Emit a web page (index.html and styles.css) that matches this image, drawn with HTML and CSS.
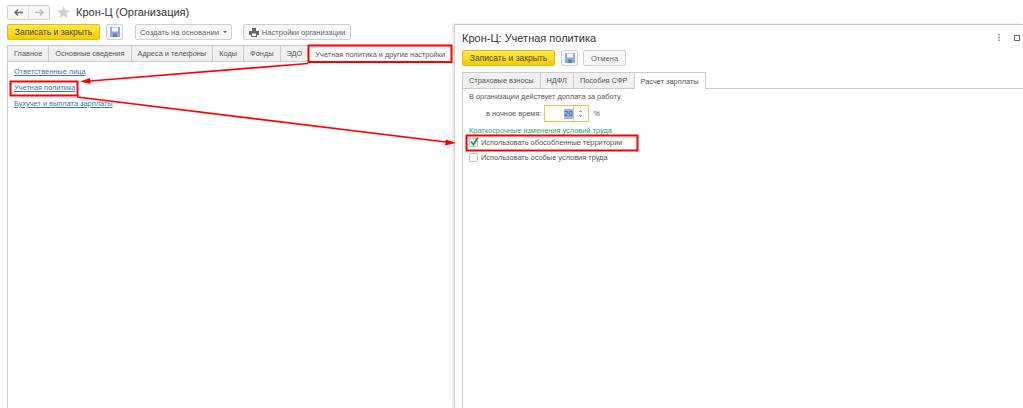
FILE: index.html
```html
<!DOCTYPE html>
<html lang="ru">
<head>
    <meta charset="UTF-8">
    <title>Крон-Ц (Организация)</title>
    <link rel="stylesheet" href="styles.css">
</head>
<body>
    <div class="page">
        <div class="org">
            <div class="title-row">
                <div class="nav-btns">
                    <span class="nav-btn">
                        <svg width="9" height="7" viewBox="0 0 9 7"><path d="M4 0.5 L1 3.5 L4 6.500 M1 3.500 H9" fill="none" stroke="#666" stroke-width="1.4"/></svg>
                    </span>
                    <span class="nav-btn">
                        <svg width="9" height="7" viewBox="0 0 9 7"><path d="M5 0.5 L8 3.5 L5 6.500 M8 3.500 H0" fill="none" stroke="#bbb" stroke-width="1.4"/></svg>
                    </span>
                </div>
                <svg class="star" width="13" height="12" viewBox="0 0 14 13"><path d="M7 0 L8.9 4.400 L14 4.900 L10.100 8 L11.300 13 L7 10.300 L2.700 13 L3.900 8 L0 4.900 L5.100 4.400 Z" fill="#cfcfcf"/></svg>
                <h1 class="org-title">Крон-Ц (Организация)</h1>
            </div>
            <div class="toolbar">
                <button class="btn btn-primary">Записать и закрыть</button>
                <button class="btn btn-icon">
                    <svg width="10" height="10" viewBox="0 0 10 10"><path d="M0 0 H10 V10 H0 Z" fill="#8fadd4"/><path d="M2 0.5 H8 V4.500 H2 Z" fill="#f4f7fb"/><path d="M3 6.500 H7 V10 H3 Z" fill="#5a7fb5"/></svg>
                </button>
                <button class="btn btn-create">Создать на основании<span class="caret"></span></button>
                <button class="btn btn-settings">
                    <svg width="10" height="9" viewBox="0 0 10 9"><path d="M3 0 H7 V3 H10 V7 H8 V9 H2 V7 H0 V3 H3 Z" fill="#666"/><path d="M3 5.500 H7 V8 H3 Z" fill="#fff"/></svg>
                    Настройки организации
                </button>
            </div>
            <div class="panel">
                <div class="tabs">
                    <span class="tab">Главное</span>
                    <span class="tab">Основные сведения</span>
                    <span class="tab">Адреса и телефоны</span>
                    <span class="tab">Коды</span>
                    <span class="tab">Фонды</span>
                    <span class="tab">ЭДО</span>
                    <span class="tab tab-active">Учетная политика и другие настройки</span>
                </div>
                <div class="links">
                    <a class="link">Ответственные лица</a>
                    <a class="link">Учетная политика</a>
                    <a class="link">Бухучет и выплата зарплаты</a>
                </div>
            </div>
        </div>

        <div class="dialog">
            <div class="dialog-head">
                <h2 class="dialog-title">Крон-Ц: Учетная политика</h2>
                <div class="dialog-tools">
                    <svg width="2" height="7" viewBox="0 0 2 7"><path d="M0 0 H2 V1.500 H0 Z M0 2.750 H2 V4.250 H0 Z M0 5.500 H2 V7 H0 Z" fill="#999"/></svg>
                    <svg width="6" height="6" viewBox="0 0 6 6"><rect x="0.5" y="0.5" width="5" height="5" fill="none" stroke="#666"/></svg>
                </div>
            </div>
            <div class="toolbar dialog-toolbar">
                <button class="btn btn-primary">Записать и закрыть</button>
                <button class="btn btn-icon">
                    <svg width="10" height="10" viewBox="0 0 10 10"><path d="M0 0 H10 V10 H0 Z" fill="#8fadd4"/><path d="M2 0.5 H8 V4.500 H2 Z" fill="#f4f7fb"/><path d="M3 6.500 H7 V10 H3 Z" fill="#5a7fb5"/></svg>
                </button>
                <button class="btn btn-cancel">Отмена</button>
            </div>
            <div class="panel">
                <div class="tabs">
                    <span class="tab">Страховые взносы</span>
                    <span class="tab">НДФЛ</span>
                    <span class="tab">Пособия СФР</span>
                    <span class="tab tab-active">Расчет зарплаты</span>
                </div>
                <div class="form">
                    <div class="form-line">В организации действует доплата за работу</div>
                    <div class="night-row">
                        <span>в ночное время:</span>
                        <span class="num-field">
                            <span class="num-value"><span class="num-selected">20</span></span>
                            <span class="num-spin">
                                <svg width="5" height="11" viewBox="0 0 5 11"><path d="M2 2 H3 V3 H2 Z M1 3 H4 V4 H1 Z M1 7 H4 V8 H1 Z M2 8 H3 V9 H2 Z" fill="#aaa"/></svg>
                            </span>
                        </span>
                        <span class="percent">%</span>
                    </div>
                    <div class="group-title">Краткосрочные изменения условий труда</div>
                    <div class="check-row">
                        <span class="check check-on">
                            <svg class="tick" width="9" height="9" viewBox="0 0 9 9"><path d="M1 4.500 L3.500 7.500 L8 0.500" fill="none" stroke="#1b9e4b" stroke-width="1.700"/></svg>
                        </span>
                        Использовать обособленные территории
                    </div>
                    <div class="check-row">
                        <span class="check"></span>
                        Использовать особые условия труда
                    </div>
                </div>
            </div>
        </div>

        <!-- red marks drawn over the screenshot -->
        <svg class="marks" width="1023" height="408" viewBox="0 0 1023 408">
            <g fill="none" stroke="#f00" stroke-width="2">
                <rect x="308.500" y="45.500" width="143" height="16.500"/>
                <rect x="10.500" y="81.500" width="67" height="14"/>
                <rect x="466.500" y="135.500" width="171" height="15"/>
            </g>
            <g fill="none" stroke="#f00" stroke-width="1.600">
                <path d="M308 63.500 L90 81"/>
                <path d="M77 97 L446 142"/>
            </g>
            <path d="M80 81.500 L90 78 L90.500 84 Z" fill="#f00"/>
            <path d="M456 143 L446 139.500 L445 145.500 Z" fill="#f00"/>
        </svg>
    </div>
</body>
</html>
```

FILE: styles.css
```css
* {
    box-sizing: border-box;
}
html, body {
    margin: 0;
    height: 100%;
    background-color: #fff;
    overflow: hidden;
}
body {
    font-family: "Liberation Sans", Arial, sans-serif;
    font-size: 7.4px;
    color: #555;
}
h1, h2 {
    margin: 0;
    font-weight: normal;
    color: #333;
}
.page {
    position: relative;
    display: flex;
    width: 1023px;
    height: 408px;
}

/* left form */
.org {
    width: 454px;
    padding: 4px 0 0 7px;
    display: flex;
    flex-direction: column;
}
.title-row {
    display: flex;
    align-items: center;
    height: 16px;
}
.nav-btns {
    display: flex;
    width: 43px;
    height: 15px;
    border: 1px solid #d0d0d0;
    border-radius: 2px;
    background-color: #f7f7f7;
}
.nav-btn {
    flex: 1;
    display: flex;
    align-items: center;
    justify-content: center;
}
.nav-btn + .nav-btn {
    border-left: 1px solid #ddd;
}
.star {
    margin-left: 7px;
}
.org-title {
    font-size: 11px;
    margin-left: 6px;
}
.toolbar {
    display: flex;
    align-items: center;
    margin-top: 4px;
    height: 16px;
}
.btn {
    height: 16px;
    padding: 0;
    border: 1px solid #d0d0d0;
    border-radius: 2px;
    background-color: #f8f8f8;
    font-family: inherit;
    font-size: 7.6px;
    color: #666;
    display: flex;
    align-items: center;
    justify-content: center;
}
.btn-primary {
    width: 93px;
    border-color: #dcbc1a;
    background: linear-gradient(#ffe94d, #f5cc00);
    font-size: 8.5px;
    color: #4a4a3a;
}
.btn-icon {
    width: 17px;
    margin-left: 6px;
}
.btn-create {
    width: 97px;
    margin-left: 12px;
}
.caret {
    margin-left: 4px;
    border-left: 2px solid transparent;
    border-right: 2px solid transparent;
    border-top: 2px solid #666;
}
.btn-settings {
    width: 108px;
    margin-left: 11px;
    gap: 3px;
}
.btn-cancel {
    width: 43px;
    margin-left: 5px;
}

/* tabs */
.panel {
    flex: 1;
    border-left: 1px solid #ccc;
    margin-top: 5px;
}
.tabs {
    display: flex;
    height: 17px;
    border-bottom: 1px solid #ccc;
}
.tab {
    display: flex;
    align-items: center;
    padding: 0 6px;
    height: 17px;
    background-color: #f0f0f0;
    border: 1px solid #ccc;
    border-left: 0;
    white-space: nowrap;
}
.tab-active {
    background-color: #fff;
    border-bottom: 0;
}
.links {
    display: flex;
    flex-direction: column;
    gap: 8px;
    padding: 6px 0 0 6px;
}
.link {
    height: 8px;
    line-height: 8px;
    color: #3a74c4;
    text-decoration: underline;
}

/* dialog over the right part */
.dialog {
    flex: 1;
    margin-top: 24px;
    padding-left: 7px;
    display: flex;
    flex-direction: column;
    border-top: 1px solid #c8c8c8;
    border-left: 1px solid #d0d0d0;
    box-shadow: -1px 0 2px #ddd;
}
.dialog-head {
    display: flex;
    align-items: center;
    justify-content: space-between;
    height: 25px;
    padding-right: 3px;
}
.dialog-title {
    font-size: 11px;
}
.dialog-tools {
    display: flex;
    align-items: center;
    gap: 14px;
}
.dialog-toolbar {
    margin-top: 0;
}
.dialog .panel {
    margin: 6px 0 0 0;
    border-left: 0;
    display: flex;
    flex-direction: column;
}
.dialog .tab:first-child {
    border-left: 1px solid #ccc;
}
.form {
    flex: 1;
    padding: 3px 0 0 6px;
    border-left: 1px solid #ccc;
}
.form-line {
    height: 10px;
    line-height: 10px;
}
.night-row {
    display: flex;
    align-items: center;
    margin: 3px 0 0 17px;
    height: 17px;
}
.num-field {
    display: flex;
    width: 45px;
    height: 17px;
    margin-left: 2px;
    border: 1px solid #f0c63c;
}
.num-value {
    flex: 1;
    display: flex;
    justify-content: flex-end;
    align-items: center;
}
.num-selected {
    background-color: #9db4e2;
    color: #1f4ba5;
    line-height: 10px;
}
.num-spin {
    width: 15px;
    display: flex;
    align-items: center;
    justify-content: center;
    border-left: 1px solid #ccc;
}
.percent {
    margin-left: 5px;
}
.group-title {
    margin-top: 4px;
    height: 9px;
    line-height: 9px;
    color: #2aa56a;
}
.check-row {
    display: flex;
    align-items: center;
    height: 15px;
    gap: 3px;
}
.check {
    position: relative;
    width: 9px;
    height: 9px;
    border: 1px solid #c4c4c4;
    border-radius: 1px;
}
.check-on {
    background-color: #eee;
}
.tick {
    position: absolute;
    left: 0;
    top: -2px;
}

/* annotations */
.marks {
    position: absolute;
    left: 0;
    top: 0;
}
```
